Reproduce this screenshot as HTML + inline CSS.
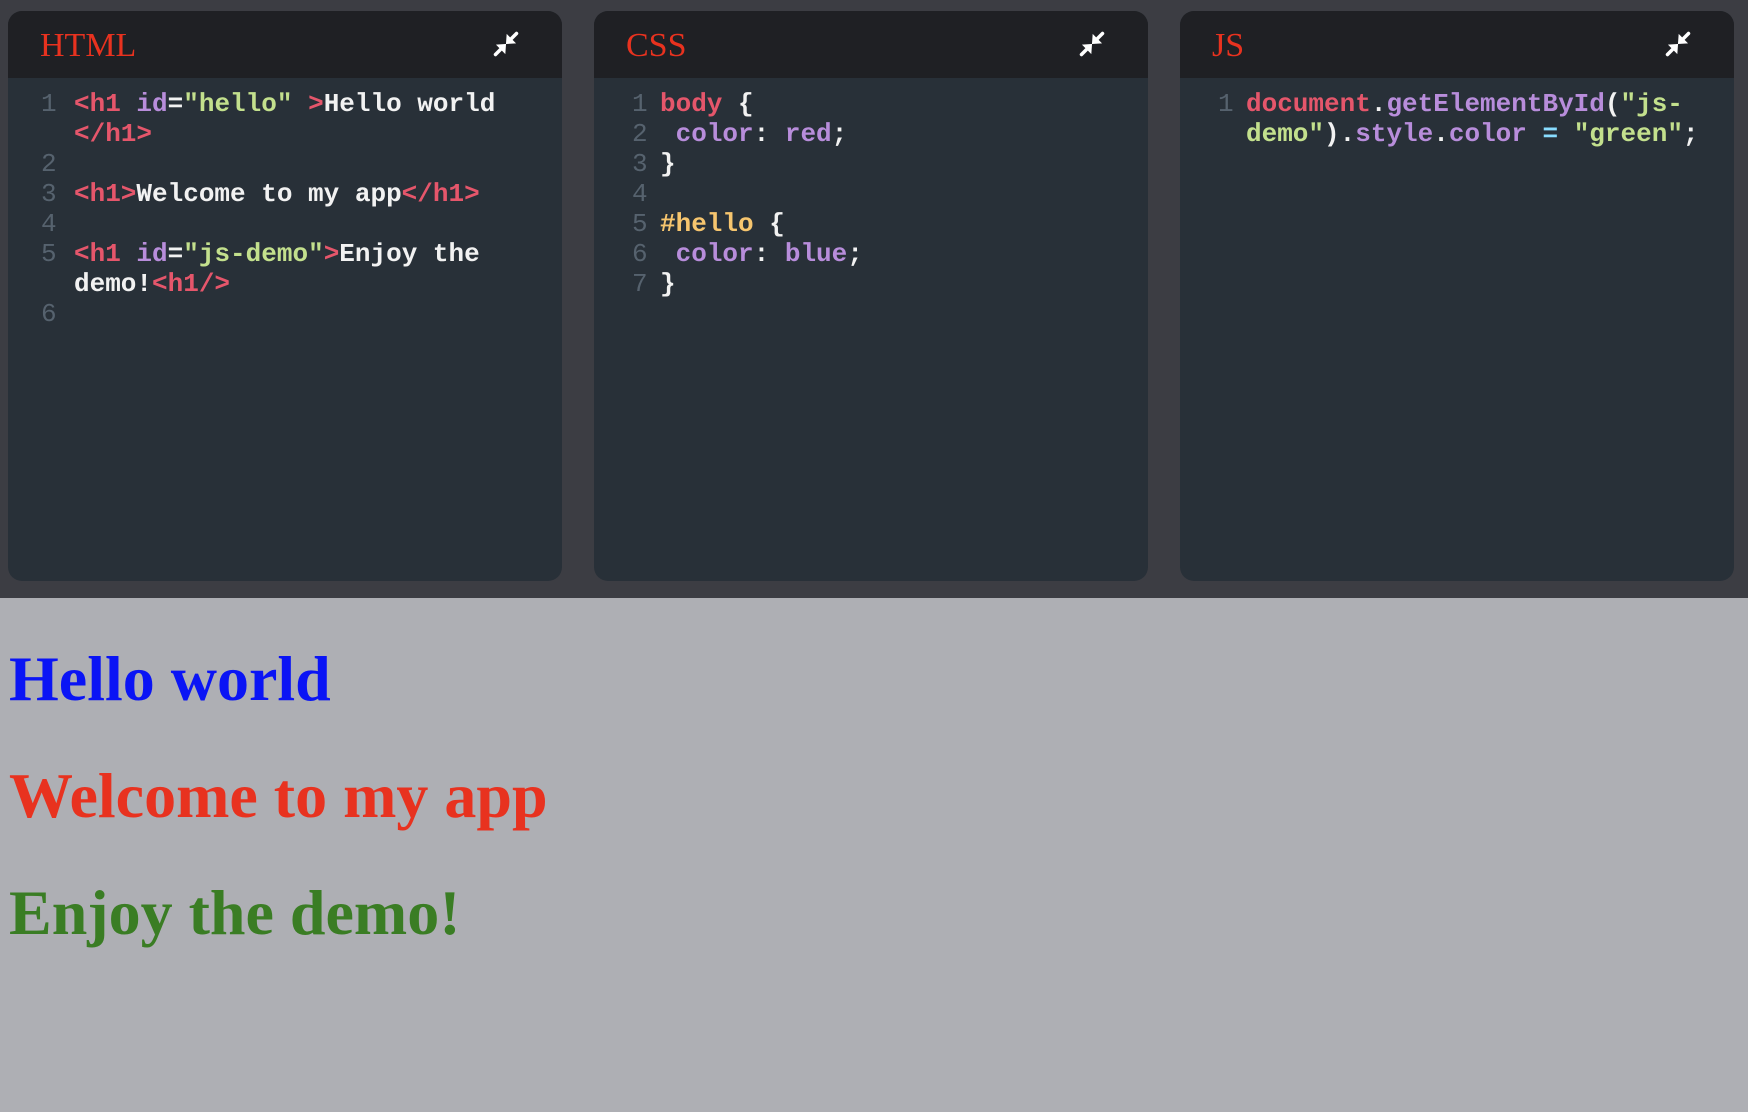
<!DOCTYPE html>
<html><head><meta charset="utf-8"><style>
*{margin:0;padding:0;box-sizing:border-box}
html,body{width:1748px;height:1112px;overflow:hidden;background:#aeafb4}
.top{position:absolute;left:0;top:0;width:1748px;height:598px;background:#3c3d43}
.panel{position:absolute;top:11px;width:554px;height:570px;background:#283038;border-radius:14px;overflow:hidden}
.hd{position:absolute;left:0;top:0;right:0;height:67px;background:#1f2024}
.ttl{position:absolute;left:32px;top:16px;font:34px "Liberation Serif",serif;color:#e8321f}
.ic{position:absolute;left:484px;top:19px}
.code{position:absolute;left:0;top:78px;font:bold 26px/30px "Liberation Mono",monospace;color:#f2f2f2;white-space:pre}
.ln{position:absolute;color:#56626e;font-weight:normal}
.l{position:absolute;left:66px}
.t{color:#e5566b}.a{color:#b88ddb}.s{color:#c3e08d}.y{color:#f6c56e}.c{color:#89ddff}
h1{position:absolute;left:9px;font:bold 64px "Liberation Serif",serif;white-space:nowrap;line-height:66px}
</style></head><body>
<div class="top"></div>
<div class="panel" style="left:8px">
<div class="hd"><div class="ttl">HTML</div><svg class="ic" width="28" height="28" viewBox="0 0 24 24"><g stroke="#fff" stroke-width="3" fill="#fff" stroke-linecap="round"><line x1="3" y1="21" x2="9" y2="15"/><path d="M11.5 12.5 L4.5 13 L11 19.5 Z" stroke-width="1"/><line x1="21" y1="3" x2="15" y2="9"/><path d="M12.5 11.5 L13 4.5 L19.5 11 Z" stroke-width="1"/></g></svg></div>
<div class="code">
<div class="ln" style="left:33px;top:0">1</div><div class="l" style="top:0"><span class="t">&lt;h1</span> <span class="a">id</span>=<span class="s">"hello"</span> <span class="t">&gt;</span>Hello world</div>
<div class="l" style="top:30px"><span class="t">&lt;/h1&gt;</span></div>
<div class="ln" style="left:33px;top:60px">2</div>
<div class="ln" style="left:33px;top:90px">3</div><div class="l" style="top:90px"><span class="t">&lt;h1&gt;</span>Welcome to my app<span class="t">&lt;/h1&gt;</span></div>
<div class="ln" style="left:33px;top:120px">4</div>
<div class="ln" style="left:33px;top:150px">5</div><div class="l" style="top:150px"><span class="t">&lt;h1</span> <span class="a">id</span>=<span class="s">"js-demo"</span><span class="t">&gt;</span>Enjoy the</div>
<div class="l" style="top:180px">demo!<span class="t">&lt;h1/&gt;</span></div>
<div class="ln" style="left:33px;top:210px">6</div>
</div></div>

<div class="panel" style="left:594px">
<div class="hd"><div class="ttl">CSS</div><svg class="ic" width="28" height="28" viewBox="0 0 24 24"><g stroke="#fff" stroke-width="3" fill="#fff" stroke-linecap="round"><line x1="3" y1="21" x2="9" y2="15"/><path d="M11.5 12.5 L4.5 13 L11 19.5 Z" stroke-width="1"/><line x1="21" y1="3" x2="15" y2="9"/><path d="M12.5 11.5 L13 4.5 L19.5 11 Z" stroke-width="1"/></g></svg></div>
<div class="code">
<div class="ln" style="left:38px;top:0">1</div><div class="l" style="top:0"><span class="t">body</span> {</div>
<div class="ln" style="left:38px;top:30px">2</div><div class="l" style="top:30px"> <span class="a">color</span>: <span class="a">red</span>;</div>
<div class="ln" style="left:38px;top:60px">3</div><div class="l" style="top:60px">}</div>
<div class="ln" style="left:38px;top:90px">4</div>
<div class="ln" style="left:38px;top:120px">5</div><div class="l" style="top:120px"><span class="y">#hello</span> {</div>
<div class="ln" style="left:38px;top:150px">6</div><div class="l" style="top:150px"> <span class="a">color</span>: <span class="a">blue</span>;</div>
<div class="ln" style="left:38px;top:180px">7</div><div class="l" style="top:180px">}</div>
</div></div>

<div class="panel" style="left:1180px">
<div class="hd"><div class="ttl">JS</div><svg class="ic" width="28" height="28" viewBox="0 0 24 24"><g stroke="#fff" stroke-width="3" fill="#fff" stroke-linecap="round"><line x1="3" y1="21" x2="9" y2="15"/><path d="M11.5 12.5 L4.5 13 L11 19.5 Z" stroke-width="1"/><line x1="21" y1="3" x2="15" y2="9"/><path d="M12.5 11.5 L13 4.5 L19.5 11 Z" stroke-width="1"/></g></svg></div>
<div class="code">
<div class="ln" style="left:38px;top:0">1</div><div class="l" style="top:0"><span class="t">document</span>.<span class="a">getElementById</span>(<span class="s">"js-</span></div>
<div class="l" style="top:30px"><span class="s">demo"</span>).<span class="a">style</span>.<span class="a">color</span> <span class="c">=</span> <span class="s">"green"</span>;</div>
</div></div>

<h1 style="top:646px;color:#0a14f5">Hello world</h1>
<h1 style="top:763px;color:#e8321f">Welcome to my app</h1>
<h1 style="top:880px;color:#3a7d24">Enjoy the demo!</h1>
</body></html>
